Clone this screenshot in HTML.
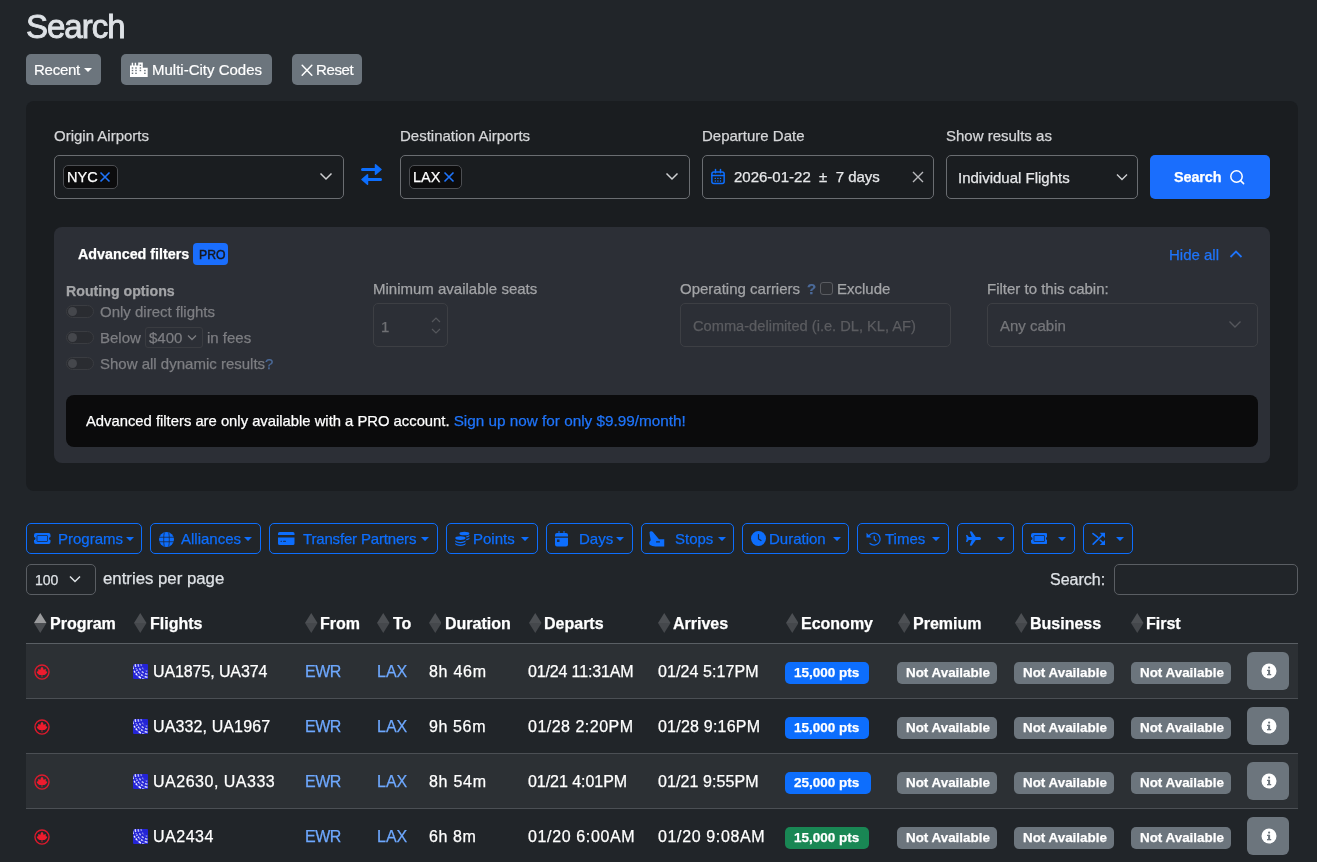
<!DOCTYPE html>
<html><head><meta charset="utf-8">
<style>
*{box-sizing:border-box;margin:0;padding:0}
html,body{width:1317px;height:862px;overflow:hidden;background:#212529;font-family:"Liberation Sans",sans-serif;color:#dee2e6}
.a{position:absolute}
.t{position:absolute;white-space:nowrap;line-height:1;-webkit-text-stroke-width:0.25px;will-change:transform}
.btn-s{position:absolute;background:#6c757d;border-radius:5px;height:31px;top:54px}
.card{position:absolute;left:26px;top:101px;width:1272px;height:390px;background:#1a1d20;border-radius:8px}
.lbl{font-size:15px;color:#d5d6d8}
.inp{position:absolute;border:1px solid #6a6d71;border-radius:5px}
.chip{position:absolute;background:#0c0c0d;border:1px solid #4c4e52;border-radius:5px;height:24px;top:165px}
.panel{position:absolute;left:54px;top:227px;width:1216px;height:236px;background:#2c2f36;border-radius:8px}
.ob{position:absolute;top:523px;height:31px;border:1px solid #0d6efd;border-radius:5px;color:#2a78f5}

.sort{position:absolute;width:12px;height:19px}
.hd{font-size:16px;font-weight:700;color:#fff}
.row{position:absolute;left:26px;width:1272px;height:55px}
.cell{font-size:16px;color:#eceef0}
.lnk{font-size:16px;color:#6ea8fe}
.bdg{position:absolute;height:22px;border-radius:5px;color:#fff;font-weight:700;font-size:13.3px}
.na{background:#6c757d}
.info{position:absolute;left:1247px;width:42px;height:38px;background:#6c757d;border-radius:6px}
</style></head><body>

<!-- Title -->
<div class="t" style="left:25.5px;top:10px;font-size:33px;color:#dee2e6;letter-spacing:-1px;-webkit-text-stroke:0.9px #dee2e6">Search</div>

<!-- top buttons -->
<div class="btn-s" style="left:26px;width:75px"></div>
<div class="t" style="left:34px;top:62px;font-size:15px;color:#fff;-webkit-text-stroke:0.2px #fff;letter-spacing:-0.25px">Recent</div>
<svg class="a" style="left:84px;top:68px" width="8" height="4" viewBox="0 0 8 4"><path d="M0 0h8L4 4z" fill="#fff"/></svg>

<div class="btn-s" style="left:121px;width:151px"></div>
<svg class="a" style="left:126px;top:58px" width="26" height="22" viewBox="0 0 26 22"><path fill="#fff" d="M4 7.4h1.7V4.8h1.4v2.6h1.6V4.8h1.4v2.6h2.1V4.6h4.6v5.2h4.9v9.1H4z"/><rect x="5.75" y="9.30" width="1.5" height="1.4" fill="#6c757d"/><rect x="5.75" y="11.80" width="1.5" height="1.4" fill="#6c757d"/><rect x="5.75" y="14.60" width="1.5" height="1.4" fill="#6c757d"/><rect x="9.25" y="9.30" width="1.5" height="1.4" fill="#6c757d"/><rect x="9.25" y="11.80" width="1.5" height="1.4" fill="#6c757d"/><rect x="9.25" y="14.60" width="1.5" height="1.4" fill="#6c757d"/><rect x="13.65" y="6.50" width="1.5" height="1.4" fill="#6c757d"/><rect x="13.65" y="9.30" width="1.5" height="1.4" fill="#6c757d"/><rect x="13.65" y="11.80" width="1.5" height="1.4" fill="#6c757d"/><rect x="18.15" y="11.80" width="1.5" height="1.4" fill="#6c757d"/><rect x="18.15" y="14.60" width="1.5" height="1.4" fill="#6c757d"/></svg>
<div class="t" style="left:152px;top:62px;font-size:15px;color:#fff;-webkit-text-stroke:0.2px #fff">Multi-City Codes</div>

<div class="btn-s" style="left:292px;width:70px"></div>
<svg class="a" style="left:300.5px;top:63.5px" width="12" height="12.5" viewBox="0 0 12 12.5"><path d="M1.2 1.2l9.6 10.1M10.8 1.2L1.2 11.3" stroke="#fff" stroke-width="1.5" stroke-linecap="round"/></svg>
<div class="t" style="left:316px;top:62px;font-size:15px;color:#fff;-webkit-text-stroke:0.2px #fff;letter-spacing:-0.35px">Reset</div>

<!-- Card -->
<div class="card"></div>
<div class="t lbl" style="left:54px;top:128px">Origin Airports</div>
<div class="t lbl" style="left:400px;top:128px">Destination Airports</div>
<div class="t lbl" style="left:702px;top:128px">Departure Date</div>
<div class="t lbl" style="left:946px;top:128px">Show results as</div>

<div class="inp" style="left:54px;top:155px;width:290px;height:44px"></div>
<div class="chip" style="left:63px;width:55px"></div>
<div class="t" style="left:67px;top:170px;font-size:14.5px;color:#fff">NYC</div>
<svg class="a" style="left:99px;top:171px" width="12" height="12" viewBox="0 0 12 12"><path d="M1.5 1.5l9 9M10.5 1.5l-9 9" stroke="#1f74fa" stroke-width="1.6"/></svg>
<svg class="a" style="left:319px;top:172px" width="14" height="9" viewBox="0 0 14 9"><path d="M1.5 1.5l5.5 5.5 5.5-5.5" stroke="#cfd0d2" stroke-width="1.5" fill="none"/></svg>

<svg class="a" style="left:360px;top:163px" width="23" height="23" viewBox="0 0 23 23"><g fill="#0d6efd" stroke="#0d6efd" stroke-linejoin="round" stroke-linecap="round"><path d="M2.5 6.5H18" stroke-width="3"/><path d="M15.5 1.8L21 6.5 15.5 11.2z" stroke-width="1.5"/><path d="M5 16.5H20.5" stroke-width="3"/><path d="M7.5 11.8L2 16.5 7.5 21.2z" stroke-width="1.5"/></g></svg>

<div class="inp" style="left:400px;top:155px;width:290px;height:44px"></div>
<div class="chip" style="left:409px;width:53px"></div>
<div class="t" style="left:413px;top:170px;font-size:14.5px;color:#fff">LAX</div>
<svg class="a" style="left:443px;top:171px" width="12" height="12" viewBox="0 0 12 12"><path d="M1.5 1.5l9 9M10.5 1.5l-9 9" stroke="#1f74fa" stroke-width="1.6"/></svg>
<svg class="a" style="left:665px;top:172px" width="14" height="9" viewBox="0 0 14 9"><path d="M1.5 1.5l5.5 5.5 5.5-5.5" stroke="#cfd0d2" stroke-width="1.5" fill="none"/></svg>

<div class="inp" style="left:702px;top:155px;width:232px;height:44px"></div>
<svg class="a" style="left:710px;top:168px" width="16" height="18" viewBox="0 0 16 18"><g fill="none" stroke="#0d6efd" stroke-width="1.5" stroke-linecap="round"><rect x="1.85" y="3.95" width="12.3" height="11.6" rx="2"/><path d="M1.85 7.4h12.3M5.5 1.5v3.2M10.5 1.5v3.2"/></g><g fill="#0d6efd"><rect x="4.6" y="9.7" width="1.4" height="1.4" rx=".4"/><rect x="4.6" y="12.3" width="1.4" height="1.4" rx=".4"/><rect x="7.2" y="9.7" width="1.4" height="1.4" rx=".4"/><rect x="7.2" y="12.3" width="1.4" height="1.4" rx=".4"/><rect x="9.8" y="9.7" width="1.4" height="1.4" rx=".4"/><rect x="9.8" y="12.3" width="1.4" height="1.4" rx=".4"/></g></svg>
<div class="t" style="left:734px;top:169px;font-size:15px;color:#e6e7e9">2026-01-22 &nbsp;± &nbsp;7 days</div>
<svg class="a" style="left:912px;top:171px" width="12" height="12" viewBox="0 0 12 12"><path d="M1 1l10 10M11 1L1 11" stroke="#b9babd" stroke-width="1.4"/></svg>

<div class="inp" style="left:946px;top:155px;width:192px;height:44px"></div>
<div class="t" style="left:958px;top:169.5px;font-size:15px;color:#e6e7e9">Individual Flights</div>
<svg class="a" style="left:1116px;top:173px" width="12" height="8" viewBox="0 0 12 8"><path d="M1 1.5l5 5 5-5" stroke="#cfd0d2" stroke-width="1.4" fill="none"/></svg>

<div class="a" style="left:1150px;top:155px;width:120px;height:44px;background:#1a6efd;border-radius:5px"></div>
<div class="t" style="left:1174px;top:170px;font-size:14.4px;font-weight:700;color:#fff;letter-spacing:-0.1px">Search</div>
<svg class="a" style="left:1229px;top:169px" width="16" height="16" viewBox="0 0 16 16"><circle cx="7.5" cy="7.5" r="5.7" stroke="#fff" stroke-width="1.5" fill="none"/><path d="M11.6 11.6l3 3" stroke="#fff" stroke-width="1.5" stroke-linecap="round"/></svg>

<!-- Advanced panel -->
<div class="panel"></div>
<div class="t" style="left:78px;top:247px;font-size:14.3px;font-weight:700;color:#fff">Advanced filters</div>
<div class="a" style="left:193px;top:243px;width:35px;height:22px;background:#1a6efd;border-radius:4px"></div>
<div class="t" style="left:198.5px;top:249px;font-size:12.2px;color:#16181d;-webkit-text-stroke:0.45px #16181d">PRO</div>
<div class="t" style="left:1169px;top:247px;font-size:15px;color:#1f74fa">Hide all</div>
<svg class="a" style="left:1229px;top:249px" width="14" height="10" viewBox="0 0 14 10"><path d="M1.5 8l5.5-5.5 5.5 5.5" stroke="#1f74fa" stroke-width="1.8" fill="none"/></svg>

<div class="t" style="left:65.5px;top:284px;font-size:14.2px;font-weight:700;color:#a3a4a7">Routing options</div>
<div class="a" style="left:66px;top:305px;width:28px;height:13px;border:1px solid #3a3c41;border-radius:7px;background:#2a2c31"></div>
<div class="a" style="left:68px;top:307px;width:9px;height:9px;border-radius:50%;background:#45474c"></div>
<div class="a" style="left:66px;top:331px;width:28px;height:13px;border:1px solid #3a3c41;border-radius:7px;background:#2a2c31"></div>
<div class="a" style="left:68px;top:333px;width:9px;height:9px;border-radius:50%;background:#45474c"></div>
<div class="a" style="left:66px;top:357px;width:28px;height:13px;border:1px solid #3a3c41;border-radius:7px;background:#2a2c31"></div>
<div class="a" style="left:68px;top:359px;width:9px;height:9px;border-radius:50%;background:#45474c"></div>
<div class="t" style="left:100px;top:304px;font-size:15px;color:#7d7e82">Only direct flights</div>
<div class="t" style="left:100px;top:330px;font-size:15px;color:#7d7e82">Below</div>
<div class="a" style="left:145px;top:327px;width:58px;height:21px;border:1px solid #3a3c41;border-radius:3px"></div>
<div class="t" style="left:149px;top:330px;font-size:15px;color:#7d7e82">$400</div>
<svg class="a" style="left:187px;top:334px" width="10" height="7" viewBox="0 0 10 7"><path d="M1 1.5l4 4 4-4" stroke="#7d7e82" stroke-width="1.3" fill="none"/></svg>
<div class="t" style="left:207px;top:330px;font-size:15px;color:#7d7e82">in fees</div>
<div class="t" style="left:100px;top:356px;font-size:15px;color:#7d7e82">Show all dynamic results<span style="color:#4b6a99">?</span></div>

<div class="t" style="left:373px;top:281px;font-size:15px;color:#a3a4a7">Minimum available seats</div>
<div class="inp" style="left:373px;top:303px;width:75px;height:44px;border-color:#3d3f44"></div>
<div class="t" style="left:381px;top:319px;font-size:15px;color:#6f7074">1</div>
<svg class="a" style="left:430px;top:316px" width="12" height="19" viewBox="0 0 12 19"><path d="M2 6l4-4 4 4M2 13l4 4 4-4" stroke="#55575c" stroke-width="1.2" fill="none"/></svg>

<div class="t" style="left:680px;top:281px;font-size:15px;color:#a3a4a7">Operating carriers</div>
<div class="t" style="left:807px;top:281px;font-size:15px;font-weight:700;color:#4b6a99">?</div>
<div class="a" style="left:820px;top:282px;width:13px;height:13px;border:1px solid #5a5c61;border-radius:3px;background:#2f3136"></div>
<div class="t" style="left:837px;top:281px;font-size:15px;color:#a3a4a7">Exclude</div>
<div class="inp" style="left:680px;top:303px;width:271px;height:44px;border-color:#3d3f44"></div>
<div class="t" style="left:693px;top:318.5px;font-size:14.65px;color:#5b5c60">Comma-delimited (i.e. DL, KL, AF)</div>

<div class="t" style="left:987px;top:281px;font-size:15px;color:#a3a4a7">Filter to this cabin:</div>
<div class="inp" style="left:987px;top:303px;width:271px;height:44px;border-color:#3d3f44"></div>
<div class="t" style="left:1000px;top:318px;font-size:15px;color:#75767a">Any cabin</div>
<svg class="a" style="left:1228px;top:320px" width="14" height="9" viewBox="0 0 14 9"><path d="M1.5 1.5l5.5 5.5 5.5-5.5" stroke="#55575c" stroke-width="1.4" fill="none"/></svg>

<div class="a" style="left:66px;top:395px;width:1192px;height:52px;background:#0b0b0c;border-radius:8px"></div>
<div class="t" style="left:86px;top:412.5px;font-size:14.8px;color:#fff">Advanced filters are only available with a PRO account. <span style="color:#1f74fa;font-size:15.3px">Sign up now for only $9.99/month!</span></div>

<!-- Filter buttons -->
<div class="ob" style="left:26px;width:116px"></div>
<div class="ob" style="left:150px;width:111px"></div>
<div class="ob" style="left:269px;width:169px"></div>
<div class="ob" style="left:446px;width:92px"></div>
<div class="ob" style="left:546px;width:87px"></div>
<div class="ob" style="left:641px;width:93px"></div>
<div class="ob" style="left:742px;width:107px"></div>
<div class="ob" style="left:857px;width:92px"></div>
<div class="ob" style="left:957px;width:57px"></div>
<div class="ob" style="left:1022px;width:53px"></div>
<div class="ob" style="left:1083px;width:50px"></div>

<div class="t" style="left:58px;top:531px;font-size:15px;color:#0d6efd">Programs</div>
<div class="t" style="left:181px;top:531px;font-size:15px;color:#0d6efd">Alliances</div>
<div class="t" style="left:303px;top:531px;font-size:15px;color:#0d6efd;letter-spacing:-0.17px">Transfer Partners</div>
<div class="t" style="left:473px;top:531px;font-size:15px;color:#0d6efd">Points</div>
<div class="t" style="left:579px;top:531px;font-size:15px;color:#0d6efd">Days</div>
<div class="t" style="left:675px;top:531px;font-size:15px;color:#0d6efd">Stops</div>
<div class="t" style="left:769px;top:531px;font-size:15px;color:#0d6efd">Duration</div>
<div class="t" style="left:885px;top:531px;font-size:15px;color:#0d6efd">Times</div>

<!--ICONS-->
<svg class="a" style="left:34px;top:533px" width="16.5" height="11" viewBox="0 0 33 22"><path fill="#0d6efd" d="M4 0h25a4 4 0 0 1 4 4v4a3 3 0 0 0 0 6v4a4 4 0 0 1-4 4H4a4 4 0 0 1-4-4v-4a3 3 0 0 0 0-6V4a4 4 0 0 1 4-4z"/><rect x="6" y="5" width="21" height="12" rx="1" fill="#0d6efd" stroke="#1b2a45" stroke-width="1.6"/></svg>
<svg class="a" style="left:159px;top:531.5px" width="15" height="15" viewBox="0 0 30 30"><circle cx="15" cy="15" r="15" fill="#0d6efd"/><g fill="none" stroke="#1a2a44" stroke-width="1.6"><path d="M0 10.5h30M0 19.5h30" /><path d="M10.5 1C9 8 9 22 10.5 29M19.5 1C21 8 21 22 19.5 29"/></g></svg>
<svg class="a" style="left:278px;top:532px" width="16.5" height="13" viewBox="0 0 33 26"><path fill="#0d6efd" d="M3 0h27a3 3 0 0 1 3 3v3H0V3a3 3 0 0 1 3-3zM0 11h33v12a3 3 0 0 1-3 3H3a3 3 0 0 1-3-3z"/><rect x="5" y="17.5" width="3" height="2" rx="1" fill="#1a2a44"/><rect x="10" y="17.5" width="6" height="2" rx="1" fill="#1a2a44"/></svg>
<svg class="a" style="left:454.5px;top:531px" width="15" height="15" viewBox="0 0 30 30"><g fill="#0d6efd"><ellipse cx="18.8" cy="5" rx="10" ry="3.7"/><path d="M22.5 10.6c3.7-.6 6.3-1.8 6.3-3v2.6c0 1.2-2.6 2.4-6.3 3zM22.5 15.8c3.7-.6 6.3-1.8 6.3-3v2.6c0 1.2-2.6 2.4-6.3 3z"/><ellipse cx="10.8" cy="14.2" rx="10.3" ry="3.8"/><path d="M.5 18.2c0 2.1 4.6 3.8 10.3 3.8s10.3-1.7 10.3-3.8v2.5c0 2.1-4.6 3.8-10.3 3.8S.5 22.8.5 20.7z"/><path d="M.5 23.6c0 2.1 4.6 3.8 10.3 3.8s10.3-1.7 10.3-3.8v2.4c0 2.1-4.6 3.8-10.3 3.8S.5 28.1.5 26z"/></g></svg>
<svg class="a" style="left:555px;top:531px" width="13" height="15.5" viewBox="0 0 26 31"><path fill="#0d6efd" d="M7 0h2v4h8V0h2v4h3a4 4 0 0 1 4 4v3H0V8a4 4 0 0 1 4-4h3zM0 13.5h26V27a4 4 0 0 1-4 4H4a4 4 0 0 1-4-4z"/><rect x="4" y="17" width="5" height="5" fill="#1a2a44"/></svg>
<svg class="a" style="left:649px;top:531px" width="15.5" height="15.5" viewBox="0 0 31 31"><path fill="#0d6efd" d="M1 2.5Q2 0 5 0.5 7.5 1 9.5 4L20 16.5h10.5V31H13Q6 30 2 28 0 26.5 0.5 23 1.5 20 3.5 18.5 1.5 10 1 2.5z"/><rect x="14" y="20.5" width="8" height="2.5" rx="1" fill="#1a2a44"/></svg>
<svg class="a" style="left:750.5px;top:531px" width="15" height="15" viewBox="0 0 30 30"><circle cx="15" cy="15" r="15" fill="#0d6efd"/><path d="M15 7v9l5 3" fill="none" stroke="#1a2a44" stroke-width="2.4" stroke-linecap="round"/></svg>
<svg class="a" style="left:865.5px;top:531px" width="15" height="15" viewBox="0 0 30 30"><g fill="none" stroke="#0d6efd" stroke-width="2.6" stroke-linecap="round"><path d="M7 8.5A12 12 0 1 1 8 25"/><path d="M16.5 11v5.5l3.2 3"/></g><path fill="#0d6efd" d="M1 3.5l9.5 9.5H1z"/></svg>
<svg class="a" style="left:966px;top:531px" width="16" height="15" viewBox="0 0 32 30"><path fill="#0d6efd" d="M30 15c0-2-2-3-4-3h-6.5L12 1.5Q11 0 9.5 0.5L7.5 1.5 11.5 12H5.5L2.5 8H0l1.5 7L0 22h2.5l3-4h6L7.5 28.5l2 1Q11 30 12 28.5L19.5 18H26c2 0 4-1 4-3z"/></svg>
<svg class="a" style="left:1030.5px;top:533px" width="16.5" height="11" viewBox="0 0 33 22"><path fill="#0d6efd" d="M4 0h25a4 4 0 0 1 4 4v4a3 3 0 0 0 0 6v4a4 4 0 0 1-4 4H4a4 4 0 0 1-4-4v-4a3 3 0 0 0 0-6V4a4 4 0 0 1 4-4z"/><rect x="6" y="5" width="21" height="12" rx="1" fill="#0d6efd" stroke="#1b2a45" stroke-width="1.6"/></svg>
<svg class="a" style="left:1091.5px;top:532px" width="13.5" height="13.5" viewBox="0 0 27 27"><g fill="none" stroke="#0d6efd" stroke-width="3.3" stroke-linecap="round"><path d="M2 3.2L11.2 10.4M2.4 24.4L22.5 4.2M16.5 16.5L22 21.5"/></g><path fill="#0d6efd" d="M15.5 1.6H26.4V12.2zM26.4 15.6V26.2H15.5z"/></svg>
<svg class="a" style="left:125.5px;top:537px" width="8" height="4.2" viewBox="0 0 8 4"><path d="M0 0h8L4 4z" fill="#0d6efd"/></svg>
<svg class="a" style="left:244px;top:537px" width="8" height="4.2" viewBox="0 0 8 4"><path d="M0 0h8L4 4z" fill="#0d6efd"/></svg>
<svg class="a" style="left:421px;top:537px" width="8" height="4.2" viewBox="0 0 8 4"><path d="M0 0h8L4 4z" fill="#0d6efd"/></svg>
<svg class="a" style="left:521px;top:537px" width="8" height="4.2" viewBox="0 0 8 4"><path d="M0 0h8L4 4z" fill="#0d6efd"/></svg>
<svg class="a" style="left:616px;top:537px" width="8" height="4.2" viewBox="0 0 8 4"><path d="M0 0h8L4 4z" fill="#0d6efd"/></svg>
<svg class="a" style="left:717.5px;top:537px" width="8" height="4.2" viewBox="0 0 8 4"><path d="M0 0h8L4 4z" fill="#0d6efd"/></svg>
<svg class="a" style="left:832.5px;top:537px" width="8" height="4.2" viewBox="0 0 8 4"><path d="M0 0h8L4 4z" fill="#0d6efd"/></svg>
<svg class="a" style="left:932px;top:537px" width="8" height="4.2" viewBox="0 0 8 4"><path d="M0 0h8L4 4z" fill="#0d6efd"/></svg>
<svg class="a" style="left:997px;top:537px" width="8" height="4.2" viewBox="0 0 8 4"><path d="M0 0h8L4 4z" fill="#0d6efd"/></svg>
<svg class="a" style="left:1058px;top:537px" width="8" height="4.2" viewBox="0 0 8 4"><path d="M0 0h8L4 4z" fill="#0d6efd"/></svg>
<svg class="a" style="left:1116px;top:537px" width="8" height="4.2" viewBox="0 0 8 4"><path d="M0 0h8L4 4z" fill="#0d6efd"/></svg>
<!--/ICONS-->
<!-- entries / search -->
<div class="inp" style="left:26px;top:564px;width:70px;height:31px;border-color:#5a5e63"></div>
<div class="t" style="left:35px;top:573px;font-size:14px;color:#dee2e6">100</div>
<svg class="a" style="left:69px;top:575px" width="12" height="8" viewBox="0 0 12 8"><path d="M1 1.5l5 5 5-5" stroke="#dee2e6" stroke-width="1.5" fill="none"/></svg>
<div class="t" style="left:103px;top:571px;font-size:16.8px;color:#dee2e6">entries per page</div>
<div class="t" style="left:1050px;top:572px;font-size:16px;color:#dee2e6">Search:</div>
<div class="inp" style="left:1114px;top:564px;width:184px;height:31px;border-color:#5a5e63"></div>

<!-- table header -->
<!--THEAD-->
<svg class="a" style="left:34.0px;top:613px" width="12.5" height="20" viewBox="0 0 12.5 20"><path d="M6.25 0L12.5 10H0z" fill="#9a9b9d"/><path d="M0 10h12.5L6.25 20z" fill="#4a4d51"/></svg>
<div class="t" style="left:49.7px;top:616px;font-size:16px;font-weight:700;color:#fff">Program</div>
<svg class="a" style="left:134.0px;top:613px" width="12.5" height="20" viewBox="0 0 12.5 20"><path d="M6.25 0L12.5 10H0z" fill="#4d5054"/><path d="M0 10h12.5L6.25 20z" fill="#45484c"/></svg>
<div class="t" style="left:149.8px;top:616px;font-size:16px;font-weight:700;color:#fff">Flights</div>
<svg class="a" style="left:305.0px;top:613px" width="12.5" height="20" viewBox="0 0 12.5 20"><path d="M6.25 0L12.5 10H0z" fill="#4d5054"/><path d="M0 10h12.5L6.25 20z" fill="#45484c"/></svg>
<div class="t" style="left:320.4px;top:616px;font-size:16px;font-weight:700;color:#fff">From</div>
<svg class="a" style="left:377.3px;top:613px" width="12.5" height="20" viewBox="0 0 12.5 20"><path d="M6.25 0L12.5 10H0z" fill="#4d5054"/><path d="M0 10h12.5L6.25 20z" fill="#45484c"/></svg>
<div class="t" style="left:392.5px;top:616px;font-size:16px;font-weight:700;color:#fff">To</div>
<svg class="a" style="left:428.6px;top:613px" width="12.5" height="20" viewBox="0 0 12.5 20"><path d="M6.25 0L12.5 10H0z" fill="#4d5054"/><path d="M0 10h12.5L6.25 20z" fill="#45484c"/></svg>
<div class="t" style="left:444.5px;top:616px;font-size:16px;font-weight:700;color:#fff">Duration</div>
<svg class="a" style="left:529.2px;top:613px" width="12.5" height="20" viewBox="0 0 12.5 20"><path d="M6.25 0L12.5 10H0z" fill="#4d5054"/><path d="M0 10h12.5L6.25 20z" fill="#45484c"/></svg>
<div class="t" style="left:544.4px;top:616px;font-size:16px;font-weight:700;color:#fff">Departs</div>
<svg class="a" style="left:658.3px;top:613px" width="12.5" height="20" viewBox="0 0 12.5 20"><path d="M6.25 0L12.5 10H0z" fill="#4d5054"/><path d="M0 10h12.5L6.25 20z" fill="#45484c"/></svg>
<div class="t" style="left:673.4px;top:616px;font-size:16px;font-weight:700;color:#fff">Arrives</div>
<svg class="a" style="left:785.8px;top:613px" width="12.5" height="20" viewBox="0 0 12.5 20"><path d="M6.25 0L12.5 10H0z" fill="#4d5054"/><path d="M0 10h12.5L6.25 20z" fill="#45484c"/></svg>
<div class="t" style="left:801.2px;top:616px;font-size:16px;font-weight:700;color:#fff">Economy</div>
<svg class="a" style="left:897.9px;top:613px" width="12.5" height="20" viewBox="0 0 12.5 20"><path d="M6.25 0L12.5 10H0z" fill="#4d5054"/><path d="M0 10h12.5L6.25 20z" fill="#45484c"/></svg>
<div class="t" style="left:913.3px;top:616px;font-size:16px;font-weight:700;color:#fff">Premium</div>
<svg class="a" style="left:1015.0px;top:613px" width="12.5" height="20" viewBox="0 0 12.5 20"><path d="M6.25 0L12.5 10H0z" fill="#4d5054"/><path d="M0 10h12.5L6.25 20z" fill="#45484c"/></svg>
<div class="t" style="left:1030px;top:616px;font-size:16px;font-weight:700;color:#fff">Business</div>
<svg class="a" style="left:1131.3px;top:613px" width="12.5" height="20" viewBox="0 0 12.5 20"><path d="M6.25 0L12.5 10H0z" fill="#4d5054"/><path d="M0 10h12.5L6.25 20z" fill="#45484c"/></svg>
<div class="t" style="left:1145.9px;top:616px;font-size:16px;font-weight:700;color:#fff">First</div>
<!--/THEAD-->
<!--ROWS-->
<div class="a" style="left:26px;top:643px;width:1272px;height:55px;background:#2c3034"></div>
<svg class="a" style="left:33.5px;top:663.5px" width="16" height="16" viewBox="0 0 16 16"><circle cx="8" cy="8" r="7.05" fill="none" stroke="#dc1a2c" stroke-width="1.35"/><path fill="#ee1c2e" d="M8 2.8C9.2 3.8 9.6 4.8 9.4 5.8 10.3 5.2 11.3 5.1 12.1 5.5 11.8 6.2 11.6 6.8 11.7 7.4 12.4 7.3 13 7.5 13.3 7.9 12.8 9.3 11.8 10.4 10.4 11L8.4 11 8.4 13.2 7.6 13.2 7.6 11 5.6 11C4.2 10.4 3.2 9.3 2.7 7.9 3 7.5 3.6 7.3 4.3 7.4 4.4 6.8 4.2 6.2 3.9 5.5 4.7 5.1 5.7 5.2 6.6 5.8 6.4 4.8 6.8 3.8 8 2.8z"/></svg>
<svg class="a" style="left:132.8px;top:663.8px" width="15.5" height="15.5" viewBox="0 0 16 16"><defs><clipPath id="uc"><rect width="16" height="16" rx="2.4"/></clipPath></defs><g clip-path="url(#uc)"><rect width="16" height="16" fill="#2424d6"/><g fill="none" stroke="#e8e9ff" stroke-width="1.5"><circle cx="17" cy="-1" r="8.8" stroke-dasharray="2.6 1.4" opacity=".5"/><circle cx="17" cy="-1" r="11.8" stroke-dasharray="2.8 1.3" opacity=".75"/><circle cx="17" cy="-1" r="14.8" stroke-dasharray="3 1.2" opacity=".9"/><circle cx="17" cy="-1" r="17.8" stroke-dasharray="3 1.1"/></g><g stroke="#2424d6" stroke-width="1"><path d="M17 -1L0 7M17 -1L1 15M17 -1L8 17"/></g></g></svg>
<div class="t" style="left:152.6px;top:664px;font-size:16px;color:#fff;letter-spacing:-0.10px">UA1875, UA374</div>
<div class="t" style="left:305.2px;top:664px;font-size:16px;color:#6ea8fe;letter-spacing:-0.5px">EWR</div>
<div class="t" style="left:377.3px;top:664px;font-size:16px;color:#6ea8fe">LAX</div>
<div class="t" style="left:428.6px;top:664px;font-size:16px;color:#fff;letter-spacing:0.72px">8h 46m</div>
<div class="t" style="left:528.4px;top:664px;font-size:16px;color:#fff;letter-spacing:-0.15px">01/24 11:31AM</div>
<div class="t" style="left:657.5px;top:664px;font-size:16px;color:#fff;letter-spacing:0.09px">01/24 5:17PM</div>
<div class="bdg" style="left:785px;top:662px;width:84px;background:#0d6efd"></div>
<div class="t" style="left:793.5px;top:666px;font-size:13.5px;font-weight:700;color:#fff">15,000 pts</div>
<div class="bdg na" style="left:897px;top:662px;width:100px"></div>
<div class="t" style="left:906px;top:666px;font-size:13.4px;font-weight:700;color:#fff">Not Available</div>
<div class="bdg na" style="left:1014px;top:662px;width:100px"></div>
<div class="t" style="left:1023px;top:666px;font-size:13.4px;font-weight:700;color:#fff">Not Available</div>
<div class="bdg na" style="left:1131px;top:662px;width:100px"></div>
<div class="t" style="left:1140px;top:666px;font-size:13.4px;font-weight:700;color:#fff">Not Available</div>
<div class="info" style="top:652px"></div>
<svg class="a" style="left:1260.5px;top:663px" width="16" height="16" viewBox="0 0 16 16"><circle cx="8" cy="8" r="7.5" fill="#fff"/><rect x="7.1" y="6.8" width="2" height="5" fill="#6c757d"/><rect x="6" y="11" width="4.2" height="1.3" fill="#6c757d"/><rect x="6" y="6.8" width="2.5" height="1.2" fill="#6c757d"/><circle cx="8.1" cy="4.6" r="1.1" fill="#6c757d"/></svg>
<div class="a" style="left:26px;top:698px;width:1272px;height:55px;background:#212529"></div>
<div class="a" style="left:26px;top:698px;width:1272px;height:1px;background:#4b4f54"></div>
<svg class="a" style="left:33.5px;top:718.5px" width="16" height="16" viewBox="0 0 16 16"><circle cx="8" cy="8" r="7.05" fill="none" stroke="#dc1a2c" stroke-width="1.35"/><path fill="#ee1c2e" d="M8 2.8C9.2 3.8 9.6 4.8 9.4 5.8 10.3 5.2 11.3 5.1 12.1 5.5 11.8 6.2 11.6 6.8 11.7 7.4 12.4 7.3 13 7.5 13.3 7.9 12.8 9.3 11.8 10.4 10.4 11L8.4 11 8.4 13.2 7.6 13.2 7.6 11 5.6 11C4.2 10.4 3.2 9.3 2.7 7.9 3 7.5 3.6 7.3 4.3 7.4 4.4 6.8 4.2 6.2 3.9 5.5 4.7 5.1 5.7 5.2 6.6 5.8 6.4 4.8 6.8 3.8 8 2.8z"/></svg>
<svg class="a" style="left:132.8px;top:718.8px" width="15.5" height="15.5" viewBox="0 0 16 16"><defs><clipPath id="uc"><rect width="16" height="16" rx="2.4"/></clipPath></defs><g clip-path="url(#uc)"><rect width="16" height="16" fill="#2424d6"/><g fill="none" stroke="#e8e9ff" stroke-width="1.5"><circle cx="17" cy="-1" r="8.8" stroke-dasharray="2.6 1.4" opacity=".5"/><circle cx="17" cy="-1" r="11.8" stroke-dasharray="2.8 1.3" opacity=".75"/><circle cx="17" cy="-1" r="14.8" stroke-dasharray="3 1.2" opacity=".9"/><circle cx="17" cy="-1" r="17.8" stroke-dasharray="3 1.1"/></g><g stroke="#2424d6" stroke-width="1"><path d="M17 -1L0 7M17 -1L1 15M17 -1L8 17"/></g></g></svg>
<div class="t" style="left:152.6px;top:719px;font-size:16px;color:#fff;letter-spacing:0.12px">UA332, UA1967</div>
<div class="t" style="left:305.2px;top:719px;font-size:16px;color:#6ea8fe;letter-spacing:-0.5px">EWR</div>
<div class="t" style="left:377.3px;top:719px;font-size:16px;color:#6ea8fe">LAX</div>
<div class="t" style="left:428.6px;top:719px;font-size:16px;color:#fff;letter-spacing:0.62px">9h 56m</div>
<div class="t" style="left:528.4px;top:719px;font-size:16px;color:#fff;letter-spacing:0.49px">01/28 2:20PM</div>
<div class="t" style="left:657.5px;top:719px;font-size:16px;color:#fff;letter-spacing:0.22px">01/28 9:16PM</div>
<div class="bdg" style="left:785px;top:717px;width:84px;background:#0d6efd"></div>
<div class="t" style="left:793.5px;top:721px;font-size:13.5px;font-weight:700;color:#fff">15,000 pts</div>
<div class="bdg na" style="left:897px;top:717px;width:100px"></div>
<div class="t" style="left:906px;top:721px;font-size:13.4px;font-weight:700;color:#fff">Not Available</div>
<div class="bdg na" style="left:1014px;top:717px;width:100px"></div>
<div class="t" style="left:1023px;top:721px;font-size:13.4px;font-weight:700;color:#fff">Not Available</div>
<div class="bdg na" style="left:1131px;top:717px;width:100px"></div>
<div class="t" style="left:1140px;top:721px;font-size:13.4px;font-weight:700;color:#fff">Not Available</div>
<div class="info" style="top:707px"></div>
<svg class="a" style="left:1260.5px;top:718px" width="16" height="16" viewBox="0 0 16 16"><circle cx="8" cy="8" r="7.5" fill="#fff"/><rect x="7.1" y="6.8" width="2" height="5" fill="#6c757d"/><rect x="6" y="11" width="4.2" height="1.3" fill="#6c757d"/><rect x="6" y="6.8" width="2.5" height="1.2" fill="#6c757d"/><circle cx="8.1" cy="4.6" r="1.1" fill="#6c757d"/></svg>
<div class="a" style="left:26px;top:753px;width:1272px;height:55px;background:#2c3034"></div>
<div class="a" style="left:26px;top:753px;width:1272px;height:1px;background:#4b4f54"></div>
<svg class="a" style="left:33.5px;top:773.5px" width="16" height="16" viewBox="0 0 16 16"><circle cx="8" cy="8" r="7.05" fill="none" stroke="#dc1a2c" stroke-width="1.35"/><path fill="#ee1c2e" d="M8 2.8C9.2 3.8 9.6 4.8 9.4 5.8 10.3 5.2 11.3 5.1 12.1 5.5 11.8 6.2 11.6 6.8 11.7 7.4 12.4 7.3 13 7.5 13.3 7.9 12.8 9.3 11.8 10.4 10.4 11L8.4 11 8.4 13.2 7.6 13.2 7.6 11 5.6 11C4.2 10.4 3.2 9.3 2.7 7.9 3 7.5 3.6 7.3 4.3 7.4 4.4 6.8 4.2 6.2 3.9 5.5 4.7 5.1 5.7 5.2 6.6 5.8 6.4 4.8 6.8 3.8 8 2.8z"/></svg>
<svg class="a" style="left:132.8px;top:773.8px" width="15.5" height="15.5" viewBox="0 0 16 16"><defs><clipPath id="uc"><rect width="16" height="16" rx="2.4"/></clipPath></defs><g clip-path="url(#uc)"><rect width="16" height="16" fill="#2424d6"/><g fill="none" stroke="#e8e9ff" stroke-width="1.5"><circle cx="17" cy="-1" r="8.8" stroke-dasharray="2.6 1.4" opacity=".5"/><circle cx="17" cy="-1" r="11.8" stroke-dasharray="2.8 1.3" opacity=".75"/><circle cx="17" cy="-1" r="14.8" stroke-dasharray="3 1.2" opacity=".9"/><circle cx="17" cy="-1" r="17.8" stroke-dasharray="3 1.1"/></g><g stroke="#2424d6" stroke-width="1"><path d="M17 -1L0 7M17 -1L1 15M17 -1L8 17"/></g></g></svg>
<div class="t" style="left:152.6px;top:774px;font-size:16px;color:#fff;letter-spacing:0.51px">UA2630, UA333</div>
<div class="t" style="left:305.2px;top:774px;font-size:16px;color:#6ea8fe;letter-spacing:-0.5px">EWR</div>
<div class="t" style="left:377.3px;top:774px;font-size:16px;color:#6ea8fe">LAX</div>
<div class="t" style="left:428.6px;top:774px;font-size:16px;color:#fff;letter-spacing:0.72px">8h 54m</div>
<div class="t" style="left:528.4px;top:774px;font-size:16px;color:#fff;letter-spacing:-0.05px">01/21 4:01PM</div>
<div class="t" style="left:657.5px;top:774px;font-size:16px;color:#fff;letter-spacing:0.09px">01/21 9:55PM</div>
<div class="bdg" style="left:785px;top:772px;width:86px;background:#0d6efd"></div>
<div class="t" style="left:793.5px;top:776px;font-size:13.5px;font-weight:700;color:#fff">25,000 pts</div>
<div class="bdg na" style="left:897px;top:772px;width:100px"></div>
<div class="t" style="left:906px;top:776px;font-size:13.4px;font-weight:700;color:#fff">Not Available</div>
<div class="bdg na" style="left:1014px;top:772px;width:100px"></div>
<div class="t" style="left:1023px;top:776px;font-size:13.4px;font-weight:700;color:#fff">Not Available</div>
<div class="bdg na" style="left:1131px;top:772px;width:100px"></div>
<div class="t" style="left:1140px;top:776px;font-size:13.4px;font-weight:700;color:#fff">Not Available</div>
<div class="info" style="top:762px"></div>
<svg class="a" style="left:1260.5px;top:773px" width="16" height="16" viewBox="0 0 16 16"><circle cx="8" cy="8" r="7.5" fill="#fff"/><rect x="7.1" y="6.8" width="2" height="5" fill="#6c757d"/><rect x="6" y="11" width="4.2" height="1.3" fill="#6c757d"/><rect x="6" y="6.8" width="2.5" height="1.2" fill="#6c757d"/><circle cx="8.1" cy="4.6" r="1.1" fill="#6c757d"/></svg>
<div class="a" style="left:26px;top:808px;width:1272px;height:55px;background:#212529"></div>
<div class="a" style="left:26px;top:808px;width:1272px;height:1px;background:#4b4f54"></div>
<svg class="a" style="left:33.5px;top:828.5px" width="16" height="16" viewBox="0 0 16 16"><circle cx="8" cy="8" r="7.05" fill="none" stroke="#dc1a2c" stroke-width="1.35"/><path fill="#ee1c2e" d="M8 2.8C9.2 3.8 9.6 4.8 9.4 5.8 10.3 5.2 11.3 5.1 12.1 5.5 11.8 6.2 11.6 6.8 11.7 7.4 12.4 7.3 13 7.5 13.3 7.9 12.8 9.3 11.8 10.4 10.4 11L8.4 11 8.4 13.2 7.6 13.2 7.6 11 5.6 11C4.2 10.4 3.2 9.3 2.7 7.9 3 7.5 3.6 7.3 4.3 7.4 4.4 6.8 4.2 6.2 3.9 5.5 4.7 5.1 5.7 5.2 6.6 5.8 6.4 4.8 6.8 3.8 8 2.8z"/></svg>
<svg class="a" style="left:132.8px;top:828.8px" width="15.5" height="15.5" viewBox="0 0 16 16"><defs><clipPath id="uc"><rect width="16" height="16" rx="2.4"/></clipPath></defs><g clip-path="url(#uc)"><rect width="16" height="16" fill="#2424d6"/><g fill="none" stroke="#e8e9ff" stroke-width="1.5"><circle cx="17" cy="-1" r="8.8" stroke-dasharray="2.6 1.4" opacity=".5"/><circle cx="17" cy="-1" r="11.8" stroke-dasharray="2.8 1.3" opacity=".75"/><circle cx="17" cy="-1" r="14.8" stroke-dasharray="3 1.2" opacity=".9"/><circle cx="17" cy="-1" r="17.8" stroke-dasharray="3 1.1"/></g><g stroke="#2424d6" stroke-width="1"><path d="M17 -1L0 7M17 -1L1 15M17 -1L8 17"/></g></g></svg>
<div class="t" style="left:152.6px;top:829px;font-size:16px;color:#fff;letter-spacing:0.52px">UA2434</div>
<div class="t" style="left:305.2px;top:829px;font-size:16px;color:#6ea8fe;letter-spacing:-0.5px">EWR</div>
<div class="t" style="left:377.3px;top:829px;font-size:16px;color:#6ea8fe">LAX</div>
<div class="t" style="left:428.6px;top:829px;font-size:16px;color:#fff;letter-spacing:0.62px">6h 8m</div>
<div class="t" style="left:528.4px;top:829px;font-size:16px;color:#fff;letter-spacing:0.64px">01/20 6:00AM</div>
<div class="t" style="left:657.5px;top:829px;font-size:16px;color:#fff;letter-spacing:0.64px">01/20 9:08AM</div>
<div class="bdg" style="left:785px;top:827px;width:84px;background:#198754"></div>
<div class="t" style="left:793.5px;top:831px;font-size:13.5px;font-weight:700;color:#fff">15,000 pts</div>
<div class="bdg na" style="left:897px;top:827px;width:100px"></div>
<div class="t" style="left:906px;top:831px;font-size:13.4px;font-weight:700;color:#fff">Not Available</div>
<div class="bdg na" style="left:1014px;top:827px;width:100px"></div>
<div class="t" style="left:1023px;top:831px;font-size:13.4px;font-weight:700;color:#fff">Not Available</div>
<div class="bdg na" style="left:1131px;top:827px;width:100px"></div>
<div class="t" style="left:1140px;top:831px;font-size:13.4px;font-weight:700;color:#fff">Not Available</div>
<div class="info" style="top:817px"></div>
<svg class="a" style="left:1260.5px;top:828px" width="16" height="16" viewBox="0 0 16 16"><circle cx="8" cy="8" r="7.5" fill="#fff"/><rect x="7.1" y="6.8" width="2" height="5" fill="#6c757d"/><rect x="6" y="11" width="4.2" height="1.3" fill="#6c757d"/><rect x="6" y="6.8" width="2.5" height="1.2" fill="#6c757d"/><circle cx="8.1" cy="4.6" r="1.1" fill="#6c757d"/></svg>
<div class="a" style="left:26px;top:643px;width:1272px;height:1px;background:#5a5f64"></div>
<!--/ROWS-->

</body></html>
